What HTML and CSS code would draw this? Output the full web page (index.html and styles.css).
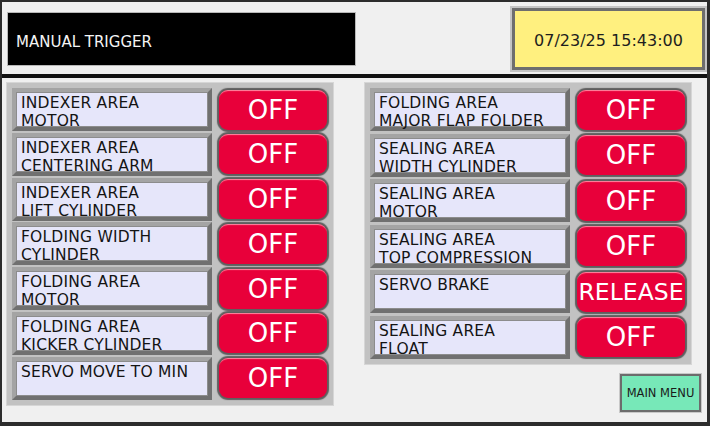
FILE: index.html
```html
<!DOCTYPE html>
<html>
<head>
<meta charset="utf-8">
<link rel="stylesheet" href="styles.css">
</head>
<body>
<div class="screen">
  <header class="header">
    <div class="title">MANUAL TRIGGER</div>
    <div class="clock">07/23/25 15:43:00</div>
  </header>
  <main class="content">
    <section class="panel panel-left">
      <div class="label">INDEXER AREA<br>MOTOR</div>
      <div class="btn">OFF</div>
      <div class="label">INDEXER AREA<br>CENTERING ARM</div>
      <div class="btn">OFF</div>
      <div class="label">INDEXER AREA<br>LIFT CYLINDER</div>
      <div class="btn">OFF</div>
      <div class="label">FOLDING WIDTH<br>CYLINDER</div>
      <div class="btn">OFF</div>
      <div class="label">FOLDING AREA<br>MOTOR</div>
      <div class="btn">OFF</div>
      <div class="label">FOLDING AREA<br>KICKER CYLINDER</div>
      <div class="btn">OFF</div>
      <div class="label">SERVO MOVE TO MIN</div>
      <div class="btn">OFF</div>
    </section>
    <div class="right-col">
      <section class="panel panel-right">
        <div class="label">FOLDING AREA<br>MAJOR FLAP FOLDER</div>
        <div class="btn">OFF</div>
        <div class="label">SEALING AREA<br>WIDTH CYLINDER</div>
        <div class="btn">OFF</div>
        <div class="label">SEALING AREA<br>MOTOR</div>
        <div class="btn">OFF</div>
        <div class="label">SEALING AREA<br>TOP COMPRESSION</div>
        <div class="btn">OFF</div>
        <div class="label">SERVO BRAKE</div>
        <div class="btn btn-wide">RELEASE</div>
        <div class="label">SEALING AREA<br>FLOAT</div>
        <div class="btn">OFF</div>
      </section>
      <div class="menu-btn">MAIN MENU</div>
    </div>
  </main>
</div>
</body>
</html>
```
FILE: styles.css
```css
* { box-sizing: border-box; }
html, body {
  margin: 0;
  padding: 0;
  background: #f0f0f0;
  font-family: "DejaVu Sans", sans-serif;
}
.screen {
  width: 710px;
  height: 426px;
  border-style: solid;
  border-color: #2c2c2c;
  border-width: 2px 3px 4px 2px;
  background: #f0f0f0;
  display: flex;
  flex-direction: column;
}
.header {
  height: 76px;
  border-bottom: 4px solid #111;
  display: flex;
  justify-content: space-between;
  align-items: flex-start;
  padding: 0 2px 0 5px;
}
.title {
  margin-top: 10px;
  width: 349px;
  height: 54px;
  background: #000;
  border: 1px solid #b8b8b8;
  color: #f4f4f4;
  font-size: 15px;
  display: flex;
  align-items: center;
  padding: 5px 0 0 8px;
}
.clock {
  margin-top: 6px;
  width: 193px;
  height: 62px;
  background: #fff07f;
  border: 3px solid #6e6e6e;
  box-shadow: 0 0 0 2px #c4c4c4;
  color: #1e1e1e;
  font-size: 16px;
  display: flex;
  align-items: center;
  justify-content: center;
  padding-top: 2px;
}
.content {
  flex: 1;
  display: flex;
  align-items: flex-start;
  padding: 5px 6px 0 5px;
  gap: 32px;
}
.panel {
  background: #c2c2c2;
  box-shadow: 0 0 0 1px #d6d6d6;
  display: grid;
  grid-template-columns: 200px 108px;
  grid-auto-rows: 43px;
  column-gap: 7px;
  row-gap: 1.8px;
  padding: 5px 6px 5px 5px;
  align-items: center;
}
.panel-right {
  row-gap: 2.6px;
}
.label {
  height: 43px;
  background: #e6e6fa;
  border: 4px solid;
  border-color: #a4a4a4 #707070 #707070 #a4a4a4;
  box-shadow: inset 0 0 0 1px #8c8c8c;
  color: #141414;
  font-size: 15.5px;
  letter-spacing: 0.2px;
  line-height: 18px;
  padding: 2px 0 0 5px;
  white-space: nowrap;
}
.btn {
  height: 40px;
  width: 108px;
  border-radius: 9px;
  background: #e8003a;
  box-shadow: 0 0 1px 2px #5e5e5e, inset 0 2px 1px -1px #ff8aa4;
  color: #fff;
  font-size: 26px;
  display: flex;
  align-items: center;
  justify-content: center;
}
.btn-wide {
  font-size: 23.5px;
}
.right-col {
  display: flex;
  flex-direction: column;
  flex: 1;
}
.panel-right {
  align-self: flex-start;
}
.menu-btn {
  align-self: flex-end;
  margin-top: 10px;
  width: 81px;
  height: 38px;
  background: #77e8b8;
  border: 2px solid #6c6c6c;
  box-shadow: 0 0 0 1px #c8c8c8;
  color: #1a1a1a;
  font-size: 11.5px;
  display: flex;
  align-items: center;
  justify-content: center;
  white-space: nowrap;
}
```
